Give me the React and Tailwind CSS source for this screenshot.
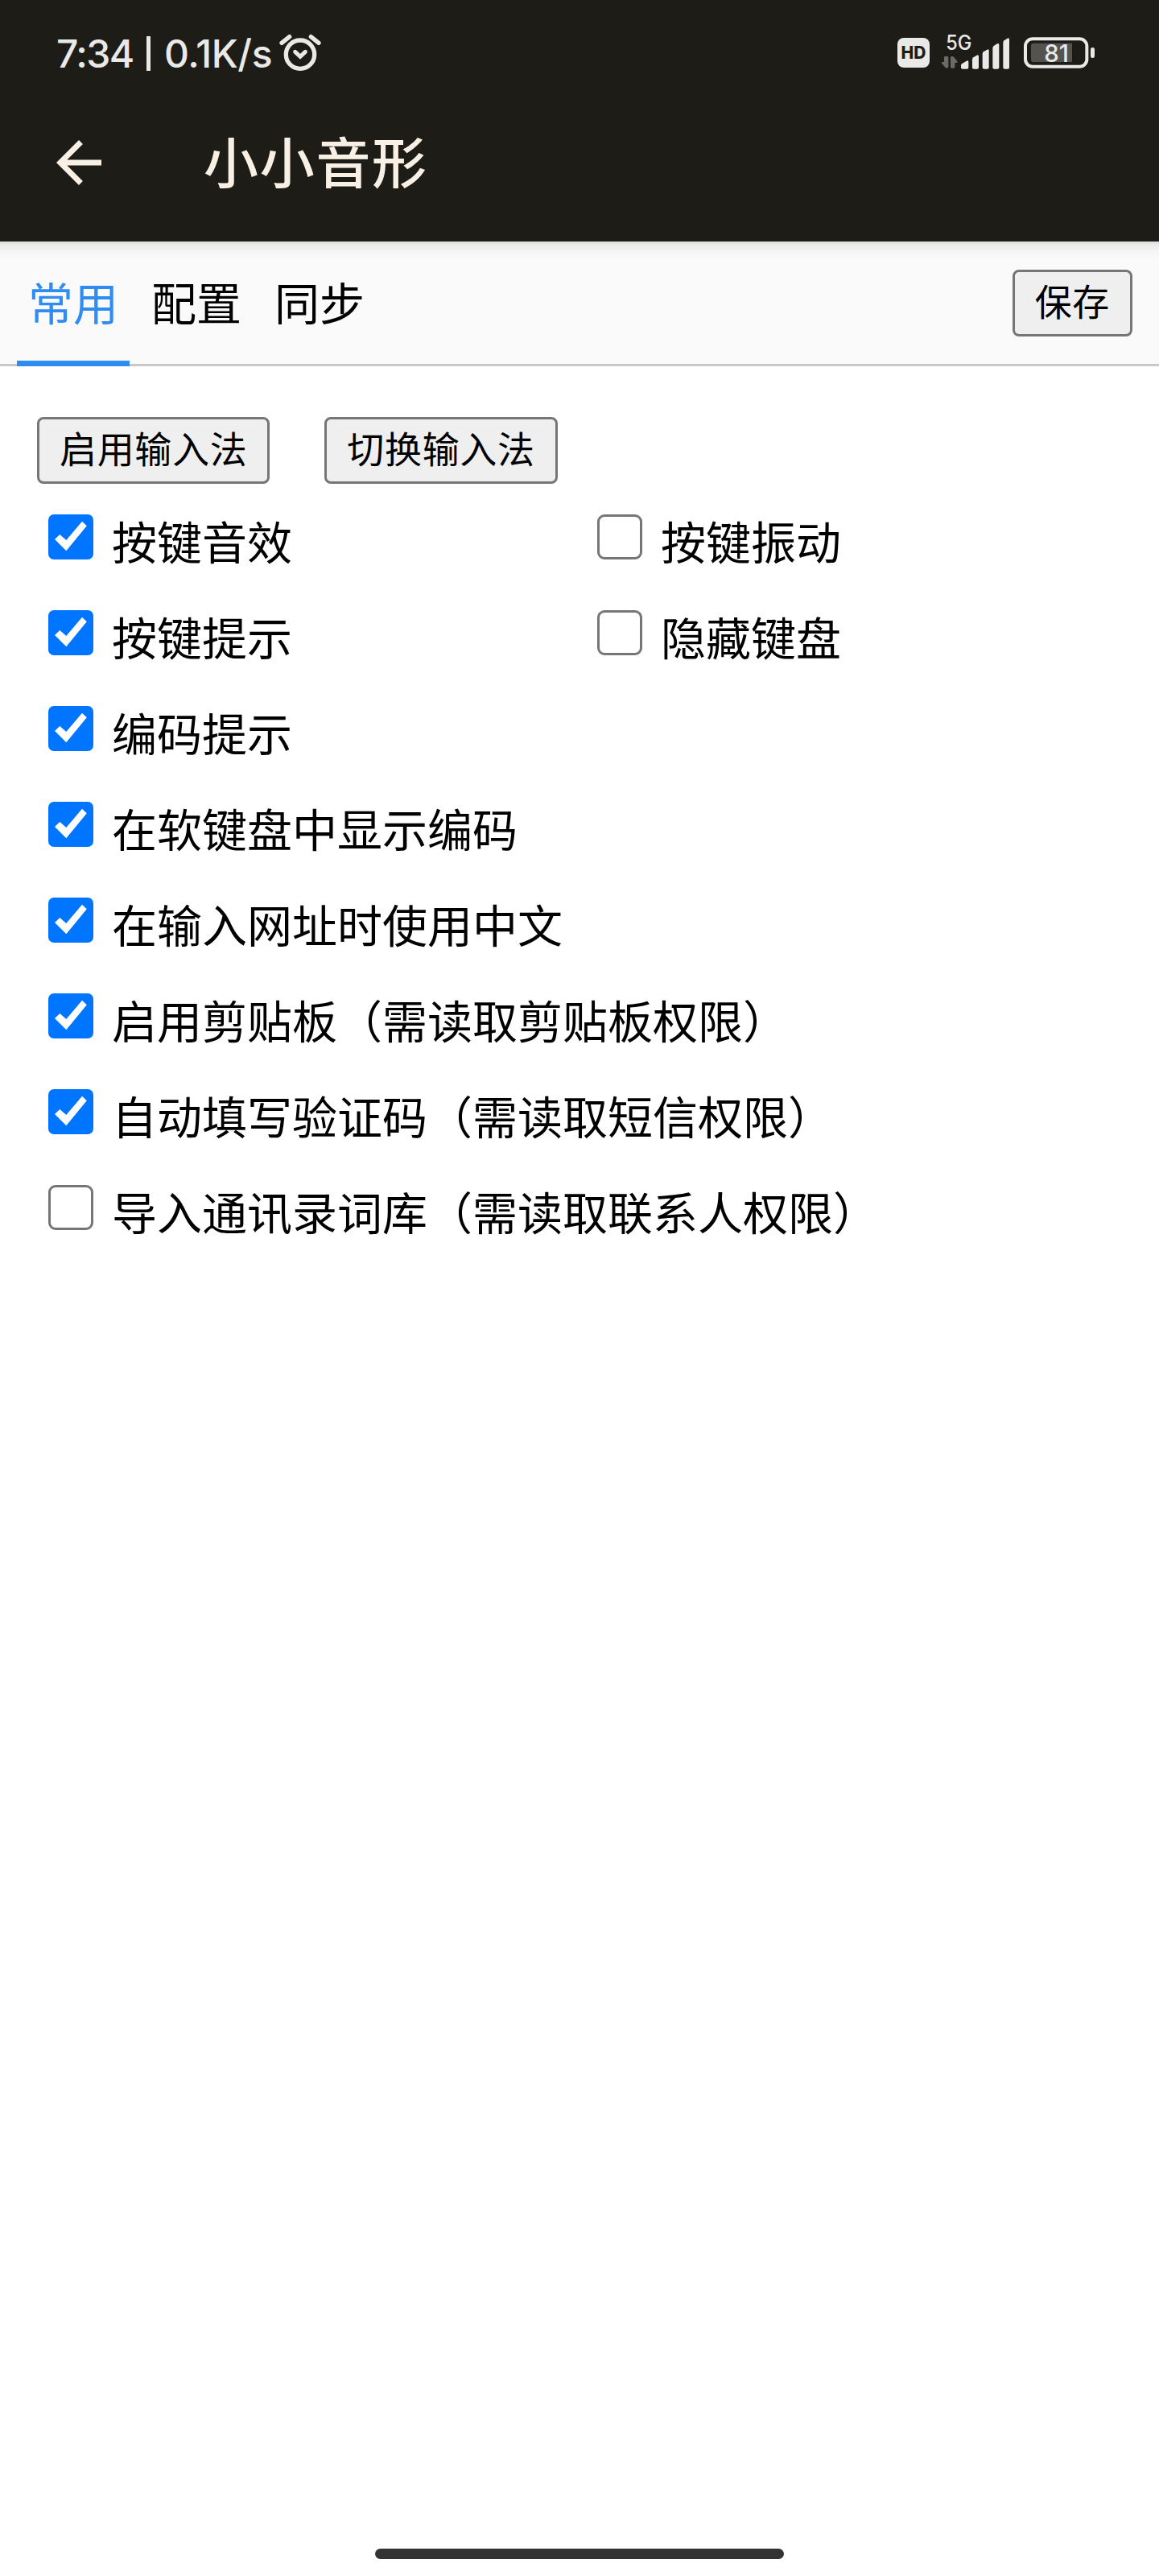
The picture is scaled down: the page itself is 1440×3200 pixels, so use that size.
function AlarmIcon() {
  return (
    <svg className="h-[48px] w-[52px]" viewBox="0 0 156 144" fill="none" stroke="#e9e9e7">
      <circle cx="78" cy="80" r="53" strokeWidth="16" />
      <path d="M59 70l19 18 19-18" strokeWidth="15" strokeLinecap="round" strokeLinejoin="miter" />
      <path d="M9 37L38 14M118 14L147 37" strokeWidth="16" strokeLinecap="round" />
    </svg>
  );
}

function HdIcon() {
  return (
    <div className="flex h-[37px] w-[40px] items-center justify-center rounded-[8px] bg-[#e9e9e7] font-['Inter'] text-[21px] leading-none font-extrabold text-[#1e1c17]">
      HD
    </div>
  );
}

function SignalIcon() {
  return (
    <svg className="h-[60px] w-[84px]" viewBox="240 18 252 180" fill="#e9e9e7">
      <text x="256" y="126" fontFamily="Inter" fontSize="76" fontWeight="500" textLength="96" lengthAdjust="spacingAndGlyphs">5G</text>
      <path fill="#6b6a66" d="M253 150h8q4 0 4 4v36q0 4-5 4q-5 0-8-4l-12-14v-5h9v-17q0-4 4-4zM278 150q5 0 8 4l12 14v6h-9v16q0 4-4 4h-8q-4 0-4-4v-36q0-4 5-4z" />
      <path d="M312 184q0-5 4-7l17-10q7-3 7 4v20q0 6-6 6h-16q-6 0-6-6z" />
      <path d="M354 162q0-5 4-8l13-8q7-3 7 4v41q0 6-6 6h-12q-6 0-6-6z" />
      <path d="M392 141q0-5 4-8l13-8q7-3 7 4v62q0 6-6 6h-12q-6 0-6-6z" />
      <path d="M430 119q0-5 4-8l13-8q7-3 7 4v84q0 6-6 6h-12q-6 0-6-6z" />
      <path d="M469 99q0-5 4-8l12-8q7-3 7 4v104q0 6-6 6h-11q-6 0-6-6z" />
    </svg>
  );
}

function BatteryIcon() {
  return (
    <svg className="h-[39px] w-[88px]" viewBox="546 78 264 117">
      <rect x="552" y="84.500" width="229" height="104" rx="27" fill="none" stroke="#e9e9e7" strokeWidth="12" />
      <path fill="#54534f" d="M583 101h143v70H583q-10 0-10-10v-50q0-10 10-10z" />
      <rect x="795" y="117" width="15" height="39" rx="7" fill="#e9e9e7" />
      <text x="622" y="171" fill="#e9e9e7" fontFamily="Inter" fontSize="88" fontWeight="500" textLength="92" lengthAdjust="spacingAndGlyphs">81</text>
    </svg>
  );
}

function StatusBar() {
  return (
    <div className="flex h-[132px] items-start justify-between pr-[80px] pl-[70px] text-[#e9e9e7]">
      <div className="flex pt-[41px]">
        <div className="flex h-[52px] items-center font-['Inter'] text-[48px] leading-none font-medium whitespace-nowrap">
          <span className="w-[112px] tracking-[-1.6px]">7:34</span>
          <span className="mt-[-2px] h-[43px] w-[5px] bg-[#e9e9e7]" />
          <span className="ml-[17px] w-[143px] tracking-[-0.4px]">0.1K/s</span>
        </div>
        <AlarmIcon />
      </div>
      <div className="flex pt-[26px]">
        <div className="mt-[21px]"><HdIcon /></div>
        <div className="ml-[15px]"><SignalIcon /></div>
        <div className="mt-[20px] ml-[18px]"><BatteryIcon /></div>
      </div>
    </div>
  );
}

function AppBar() {
  return (
    <div className="flex h-[140px] items-center pl-[56px]">
      <svg className="h-[84px] w-[84px]" viewBox="0 0 24 24" fill="#f8f0e5">
        <path d="M20 11H7.830l5.590-5.590L12 4l-8 8 8 8 1.410-1.410L7.830 13H20v-2z" />
      </svg>
      <h1 className="mb-[7px] ml-[113px] text-[68px] leading-[84px] font-medium tracking-[1.7px] text-[#f8f0e5]">小小音形</h1>
    </div>
  );
}

function Button({ children }) {
  return (
    <button className="flex h-[83px] items-center justify-center rounded-[8px] border-[3px] border-[#767676] bg-[#efefef] px-[25px] pb-[9px] text-[46px] leading-none tracking-[0.67px] text-black">
      {children}
    </button>
  );
}

function Tab({ label, active }) {
  return active ? (
    <div className="h-full border-b-[7px] border-[#2f8cf0] px-[14px] pt-[34px] text-[#2f8cf0]">{label}</div>
  ) : (
    <div className="h-full px-[14px] pt-[34px] text-black">{label}</div>
  );
}

function Check({ label, checked }) {
  return (
    <label className="flex h-[119px] items-start">
      {checked ? (
        <svg className="h-[56px] w-[56px] rounded-[7px] bg-[#0075ff]" viewBox="0 0 56 56">
          <path fill="#fff" d="M8 31L14.300 25L22.300 32L42 8.700L47.800 14.300L22.300 45.300z" />
        </svg>
      ) : (
        <span className="h-[56px] w-[56px] rounded-[9px] border-[3px] border-[#767676] bg-white" />
      )}
      <span className="mt-[-4px] ml-[23px] text-[56px] leading-[72px] whitespace-nowrap text-black">{label}</span>
    </label>
  );
}

const pairs = [
  [{ label: "按键音效", checked: true }, { label: "按键振动" }],
  [{ label: "按键提示", checked: true }, { label: "隐藏键盘" }],
];

const options = [
  { label: "编码提示", checked: true },
  { label: "在软键盘中显示编码", checked: true },
  { label: "在输入网址时使用中文", checked: true },
  { label: "启用剪贴板（需读取剪贴板权限）", checked: true },
  { label: "自动填写验证码（需读取短信权限）", checked: true },
  { label: "导入通讯录词库（需读取联系人权限）", checked: false },
];

export default function App() {
  return (
    <div lang="zh-CN" className="flex h-[3200px] w-[1440px] flex-col bg-white font-['Noto_Sans_CJK_SC',sans-serif]">
      <header className="h-[300px] bg-[#1e1c17]">
        <StatusBar />
        <AppBar />
      </header>
      <nav className="flex h-[155px] justify-between bg-[#fafafa] bg-[linear-gradient(to_bottom,#dfdfdf_0,#ededed_5px,#f5f5f5_12px,#fafafa_22px)] pr-[33px] pl-[21px] shadow-[inset_0_-3px_0_#c8c8c8]">
        <div className="flex gap-[13px] text-[56px] leading-[80px]">
          <Tab label="常用" active />
          <Tab label="配置" />
          <Tab label="同步" />
        </div>
        <div className="pt-[35px]"><Button>保存</Button></div>
      </nav>
      <main className="flex-1 pt-[63px]">
        <div className="flex gap-[68px] pl-[46px]">
          <Button>启用输入法</Button>
          <Button>切换输入法</Button>
        </div>
        <div className="mt-[38px] pl-[60px]">
          {pairs.map(([left, right]) => (
            <div key={left.label} className="grid grid-cols-[682px_1fr]">
              <Check {...left} />
              <Check {...right} />
            </div>
          ))}
          {options.map((o) => (
            <Check key={o.label} {...o} />
          ))}
        </div>
      </main>
      <footer className="flex h-[34px] justify-center">
        <div className="h-[13px] w-[508px] rounded-full bg-[#333]" />
      </footer>
    </div>
  );
}
